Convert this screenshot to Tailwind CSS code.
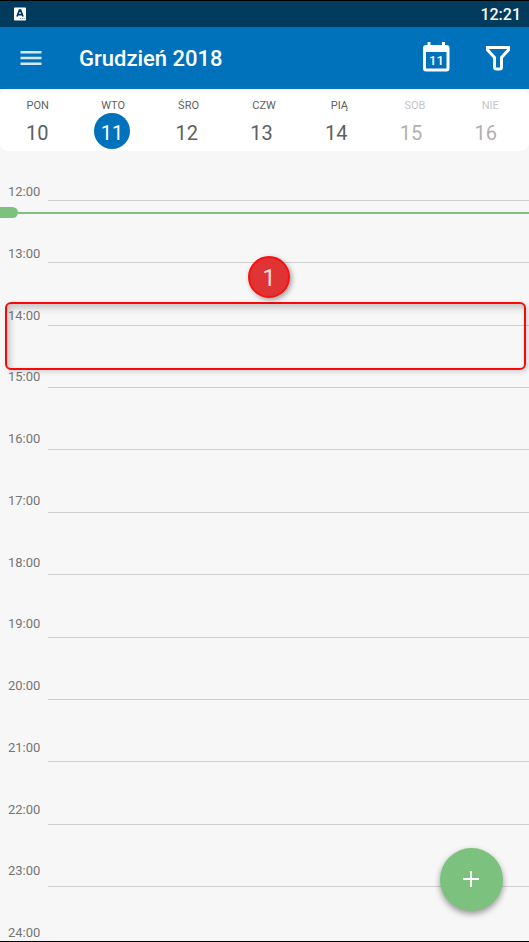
<!DOCTYPE html>
<html lang="pl">
<head>
    <meta charset="UTF-8">
    <meta name="viewport" content="width=device-width, initial-scale=1.0">
    <title>Grudzień 2018</title>
    <script src="https://cdn.jsdelivr.net/npm/@tailwindcss/browser@4"></script>
</head>
<body class="min-h-screen flex flex-col border-y border-black bg-[#f7f7f7] font-[Roboto,sans-serif]">

    <!-- Status bar -->
    <div class="h-[26px] flex items-center justify-between pl-[14px] pr-2 bg-[#003a5d] text-white">
        <svg class="w-3 h-[14px]" viewBox="0 0 12 14">
            <rect width="12" height="13" y="0.5" rx="0.8" fill="#fff"/>
            <path d="M3 9.5 5.4 3.2h1.2L9 9.5M4 7.6h4" fill="none" stroke="#003a5d" stroke-width="1.7"/>
            <path d="M6 11.6h5" stroke="#7f9cae" stroke-width="1" stroke-dasharray="1.2 0.6"/>
        </svg>
        <span class="pt-0.5 text-base leading-6 font-medium">12:21</span>
    </div>

    <!-- App bar -->
    <header class="h-[62px] flex items-center pl-5 pr-[18px] bg-[#0071bb] text-white">
        <button type="button" aria-label="Menu" class="mr-[37px]">
            <svg class="w-[22px] h-4" viewBox="0 0 22 16" fill="#d5e8f5">
                <path d="M0.5 1h21v2.400h-21zM0.5 6.800h21v2.400h-21zM0.5 12.600h21v2.400h-21z"/>
            </svg>
        </button>
        <h1 class="flex-1 pt-0.5 text-[22px] leading-7 font-medium">Grudzień 2018</h1>
        <button type="button" aria-label="Dzisiaj" class="relative mr-[34px]">
            <svg class="w-7 h-8" viewBox="0 0 28 32">
                <path d="M4.500 0h3v3h11.500V0h3v3H23.500a3 3 0 0 1 3 3v20.500a3 3 0 0 1-3 3H3a3 3 0 0 1-3-3V6a3 3 0 0 1 3-3h1.500zM3 10V26.500h20.500V10z" fill="#fff" fill-rule="evenodd"/>
            </svg>
            <span class="absolute left-0 right-px top-[11px] text-[13px] leading-4 font-medium">11</span>
        </button>
        <button type="button" aria-label="Filtr">
            <svg class="w-[26px] h-[26px]" viewBox="0 0 26 26" fill="none" stroke="#fff" stroke-width="3">
                <path d="M2.500 2.500h21v2.300l-7 7.700v9.500a2 2 0 0 1-2 2h-3a2 2 0 0 1-2-2v-9.500l-7-7.700z"/>
            </svg>
        </button>
    </header>

    <!-- Week strip -->
    <nav class="h-[62px] pt-2 rounded-lg bg-white text-center text-[#606060]">
        <div class="grid grid-cols-7 pt-0.5 pr-px text-[11px] leading-[14px]">
            <span id="mon">PON</span>
            <span id="tue">WTO</span>
            <span id="wed">ŚRO</span>
            <span id="thu">CZW</span>
            <span id="fri">PIĄ</span>
            <span id="sat" class="text-[#c4c4c4]">SOB</span>
            <span id="sun" class="text-[#c4c4c4]">NIE</span>
        </div>
        <div class="grid grid-cols-7 justify-items-center pr-[6px] text-xl leading-9">
            <button type="button" aria-describedby="mon" class="size-9 pt-0.5 rounded-full">10</button>
            <button type="button" aria-describedby="tue" aria-current="date" class="size-9 pt-0.5 rounded-full bg-[#0071bb] text-white">11</button>
            <button type="button" aria-describedby="wed" class="size-9 pt-0.5 rounded-full">12</button>
            <button type="button" aria-describedby="thu" class="size-9 pt-0.5 rounded-full">13</button>
            <button type="button" aria-describedby="fri" class="size-9 pt-0.5 rounded-full">14</button>
            <button type="button" aria-describedby="sat" class="size-9 pt-0.5 rounded-full text-[#b0b0b0]">15</button>
            <button type="button" aria-describedby="sun" class="size-9 pt-0.5 rounded-full text-[#b0b0b0]">16</button>
        </div>
    </nav>

    <!-- Day timeline -->
    <main class="relative flex-1 flex">
        <div class="w-12 pt-[33px] pl-2 flex flex-col justify-between text-[13px] leading-4 text-[#757575]">
            <span>12:00</span>
            <span>13:00</span>
            <span>14:00</span>
            <span>15:00</span>
            <span>16:00</span>
            <span>17:00</span>
            <span>18:00</span>
            <span>19:00</span>
            <span>20:00</span>
            <span>21:00</span>
            <span>22:00</span>
            <span>23:00</span>
            <span>24:00</span>
        </div>
        <div class="flex-1 pt-[49px] pb-[54px] flex flex-col justify-between">
            <div class="h-px bg-[#d0d0d0]"></div>
            <div class="h-px bg-[#d0d0d0]"></div>
            <div class="h-px bg-[#d0d0d0]"></div>
            <div class="h-px bg-[#d0d0d0]"></div>
            <div class="h-px bg-[#d0d0d0]"></div>
            <div class="h-px bg-[#d0d0d0]"></div>
            <div class="h-px bg-[#d0d0d0]"></div>
            <div class="h-px bg-[#d0d0d0]"></div>
            <div class="h-px bg-[#d0d0d0]"></div>
            <div class="h-px bg-[#d0d0d0]"></div>
            <div class="h-px bg-[#d0d0d0]"></div>
            <div class="h-px bg-[#d0d0d0]"></div>
        </div>

        <!-- Current time -->
        <div class="absolute inset-x-0 top-14 flex items-center">
            <div class="w-[18px] h-[11px] rounded-r-full bg-[#7cc17e]"></div>
            <div class="flex-1 h-0.5 bg-[#7cc17e]"></div>
        </div>

        <!-- Highlighted slot -->
        <div class="absolute left-[5px] right-[3px] top-[151px] h-[68px] rounded-md border-2 border-[#f80808] shadow-[2px_2px_5px_rgba(0,0,0,0.15),inset_3px_4px_6px_rgba(0,0,0,0.2)]"></div>
        <div class="absolute left-[248px] top-[105px] size-[42px] rounded-full border-2 border-[#fb1010] bg-[#e03333] shadow-[2px_2px_5px_rgba(0,0,0,0.35)] text-center text-2xl leading-10 text-[#fbdcdc]">1</div>

        <button type="button" aria-label="Dodaj" class="absolute right-[26px] bottom-[30px] size-[63px] flex items-center justify-center rounded-full bg-[#7cc17e] shadow-[0_3px_6px_rgba(0,0,0,0.4)]">
            <svg class="size-[17px]" viewBox="0 0 17 17" stroke="#fff" stroke-width="2">
                <path d="M0 8h16M8 0v16"/>
            </svg>
        </button>
    </main>

</body>
</html>
